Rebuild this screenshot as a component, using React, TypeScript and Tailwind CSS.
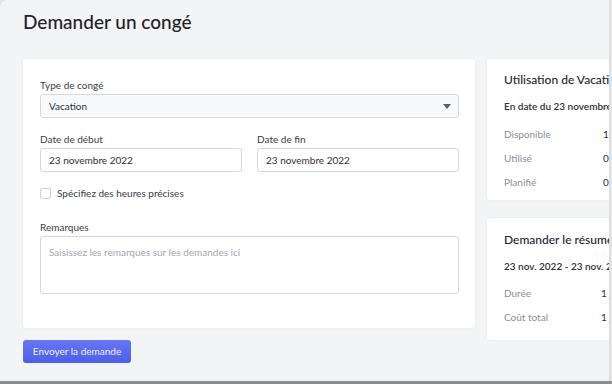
import React from "react";

const font = { fontFamily: "Lato, 'Open Sans', sans-serif" };

function Field({ label, children }: { label: string; children: React.ReactNode }) {
  return (
    <div className="flex flex-col">
      <div className="text-[10px] leading-[12px] text-[#3a3d42] mb-[3px]">{label}</div>
      {children}
    </div>
  );
}

function Row({ label, value, w }: { label: string; value: string; w: string }) {
  return (
    <div className="flex text-[10px] leading-[12px] whitespace-nowrap">
      <div className={`${w} text-[#8b9099] shrink-0`}>{label}</div>
      <div className="text-[#2d3035]">{value}</div>
    </div>
  );
}

export default function App() {
  return (
    <div className="w-[612px] h-[384px] bg-[#e4e4e4] overflow-hidden relative" style={font}>
      <div className="w-[610px] h-[381px] bg-[#f3f4f6] rounded-tl-lg border-r border-[#d9dadc] overflow-hidden">
        <h1 className="pt-[10px] pl-[23px] text-[19px] leading-[24px] font-medium text-[#1f2329]">
          Demander un congé
        </h1>
        <div className="flex items-start gap-[12px] pl-[23px] mt-[25px]">
          <div className="w-[452px] shrink-0 flex flex-col">
            <div className="bg-white rounded-[3px] shadow-[0_0_2px_rgba(0,0,0,0.08)] px-[17px] pr-[16px] pt-[20px] pb-[34px]">
              <Field label="Type de congé">
                <div className="h-[24px] rounded-[3px] border border-[#d6d8dc] bg-[#f8f9fa] flex items-center justify-between pl-[8px] pr-[7px] text-[10px] text-[#2d3035]">
                  <span>Vacation</span>
                  <svg width="8" height="5" viewBox="0 0 8 5">
                    <path d="M0 0 H8 L4 5 Z" fill="#5a5e66" />
                  </svg>
                </div>
              </Field>
              <div className="grid grid-cols-2 gap-[15px] mt-[15px]">
                <Field label="Date de début">
                  <div className="h-[24px] rounded-[3px] border border-[#d6d8dc] bg-white flex items-center pl-[8px] text-[10px] text-[#2d3035]">
                    23 novembre 2022
                  </div>
                </Field>
                <Field label="Date de fin">
                  <div className="h-[24px] rounded-[3px] border border-[#d6d8dc] bg-white flex items-center pl-[8px] text-[10px] text-[#2d3035]">
                    23 novembre 2022
                  </div>
                </Field>
              </div>
              <div className="flex items-center gap-[6px] mt-[15px]">
                <div className="w-[11px] h-[11px] rounded-[2px] border border-[#cfd2d6] bg-white" />
                <span className="text-[10px] leading-[12px] text-[#3a3d42]">Spécifiez des heures précises</span>
              </div>
              <div className="mt-[22px]">
                <Field label="Remarques">
                  <div className="h-[58px] rounded-[3px] border border-[#d6d8dc] bg-white pl-[8px] pt-[9px] text-[10px] leading-[12px] text-[#a4a8ae]">
                    Saisissez les remarques sur les demandes ici
                  </div>
                </Field>
              </div>
            </div>
            <button className="mt-[12px] w-[108px] h-[23px] rounded-[3px] bg-gradient-to-b from-[#6676f3] to-[#4e5ee9] text-[10px] text-[#eef0ff] flex items-center justify-center">
              Envoyer la demande
            </button>
          </div>
          <div className="w-[180px] shrink-0 flex flex-col gap-[18px]">
            <div className="bg-white rounded-[3px] shadow-[0_0_2px_rgba(0,0,0,0.08)] h-[141px] pl-[17px] pt-[13px] whitespace-nowrap">
              <div className="text-[12px] leading-[16px] font-medium text-[#1f2329]">Utilisation de Vacation</div>
              <div className="mt-[12px] text-[10px] leading-[12px] font-semibold text-[#2d3035]">En date du 23 novembre 2022</div>
              <div className="mt-[16px] flex flex-col gap-[12px]">
                <Row label="Disponible" value="10 j" w="w-[99px]" />
                <Row label="Utilisé" value="0 j" w="w-[99px]" />
                <Row label="Planifié" value="0 j" w="w-[99px]" />
              </div>
            </div>
            <div className="bg-white rounded-[3px] shadow-[0_0_2px_rgba(0,0,0,0.08)] h-[122px] pl-[17px] pt-[14px] whitespace-nowrap">
              <div className="text-[12px] leading-[16px] font-medium text-[#1f2329]">Demander le résumé</div>
              <div className="mt-[12px] text-[10px] leading-[12px] font-semibold text-[#2d3035]">23 nov. 2022 - 23 nov. 2022</div>
              <div className="mt-[15px] flex flex-col gap-[12px]">
                <Row label="Durée" value="1 j" w="w-[97px]" />
                <Row label="Coût total" value="1 j" w="w-[97px]" />
              </div>
            </div>
          </div>
        </div>
      </div>
      <div className="h-[3px] w-full bg-[#8c8d90]" />
    </div>
  );
}
